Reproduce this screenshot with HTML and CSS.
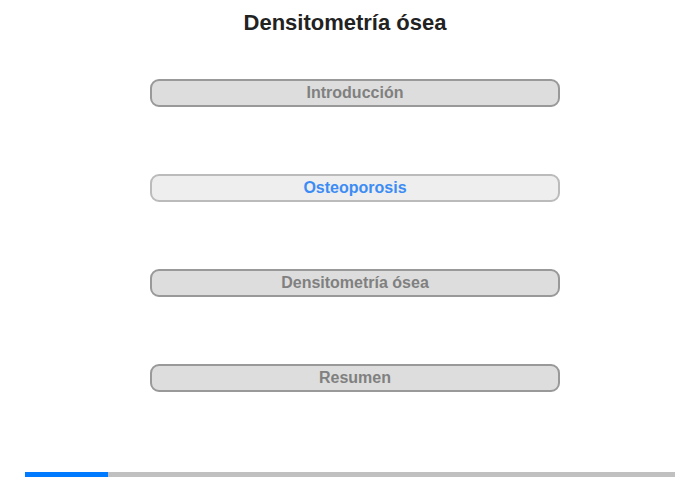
FILE: index.html
```html
<!DOCTYPE html>
<html lang="es">
<head>
  <meta charset="UTF-8">
  <title>Densitometría ósea</title>
  <link rel="stylesheet" href="styles.css">
</head>
<body>
  <div class="page">
    <h1 class="title">Densitometría ósea</h1>

    <div class="menu">
      <button class="menu-btn">Introducción</button>
      <button class="menu-btn current">Osteoporosis</button>
      <button class="menu-btn">Densitometría ósea</button>
      <button class="menu-btn">Resumen</button>
    </div>

    <div class="progress">
      <div class="progress-fill" style="width: 12.8%"></div>
    </div>
  </div>
</body>
</html>
```

FILE: styles.css
```css
body {
  margin: 0;
  font-family: "Liberation Sans", Arial, sans-serif;
  background: white;
}
.page {
  height: 480px;
  display: flex;
  flex-direction: column;
  align-items: center;
}
.title {
  margin: 10px 10px 0 0;
  font-size: 22px;
  line-height: 25px;
  color: #222;
}
.menu {
  display: flex;
  flex-direction: column;
  gap: 67px;
  margin: 44px 0 0 10px;
}
.menu-btn {
  width: 410px;
  height: 28px;
  padding: 0;
  border: 2px solid #999;
  border-radius: 9px;
  background: #ddd;
  color: #808080;
  font-family: inherit;
  font-size: 16px;
  font-weight: bold;
  cursor: pointer;
}
.menu-btn.current {
  border-color: #bbb;
  background: #eee;
  color: #3c8cf5;
}
.progress {
  margin-top: auto;
  margin-bottom: 3px;
  width: 650px;
  height: 5px;
  background: #c0c0c0;
}
.progress-fill {
  height: 100%;
  background: #007bff;
}
```
